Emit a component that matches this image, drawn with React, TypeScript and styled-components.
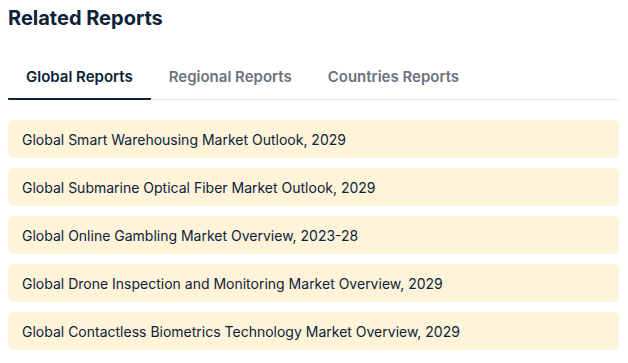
import * as React from 'react';
import styled, { createGlobalStyle } from 'styled-components';

const reports = [
  'Global Smart Warehousing Market Outlook, 2029',
  'Global Submarine Optical Fiber Market Outlook, 2029',
  'Global Online Gambling Market Overview, 2023-28',
  'Global Drone Inspection and Monitoring Market Overview, 2029',
  'Global Contactless Biometrics Technology Market Overview, 2029',
];

const tabs = ['Global Reports', 'Regional Reports', 'Countries Reports'];

export default function App() {
  const [active, setActive] = React.useState(0);

  return (
    <>
      <GlobalStyle />
      <Page>
        <Title>Related Reports</Title>
        <TabBar>
          {tabs.map((t, i) => (
            <Tab key={t} $active={i === active} onClick={() => setActive(i)}>
              {t}
            </Tab>
          ))}
        </TabBar>
        <List>
          {reports.map((r) => (
            <Item key={r}>{r}</Item>
          ))}
        </List>
      </Page>
    </>
  );
}

const GlobalStyle = createGlobalStyle`
  body {
    margin: 0;
    background: #ffffff;
    font-family: Inter, "Open Sans", sans-serif;
  }
`;

const Page = styled.div`
  padding: 6px 9px 8px 8px;
`;

const Title = styled.h2`
  margin: 0;
  font-size: 20px;
  line-height: 24px;
  font-weight: 700;
  color: #0b2239;
`;

const TabBar = styled.div`
  display: flex;
  margin-top: 30px;
  border-bottom: 1px solid #e5e7eb;
`;

const Tab = styled.div<{ $active: boolean }>`
  padding: 8px 18px 12px 18px;
  margin-bottom: -1px;
  font-size: 15px;
  line-height: 18px;
  font-weight: 600;
  color: ${(p) => (p.$active ? '#0b2239' : '#6b7280')};
  border-bottom: 2px solid ${(p) => (p.$active ? '#0b2239' : 'transparent')};
  border-radius: 1px;
  cursor: pointer;
`;

const List = styled.div`
  display: flex;
  flex-direction: column;
  gap: 10px;
  margin-top: 20px;
`;

const Item = styled.div`
  height: 38px;
  display: flex;
  align-items: center;
  padding: 0 14px;
  background: #fff4d9;
  border-radius: 6px;
  font-size: 14px;
  color: #0b2239;
`;
